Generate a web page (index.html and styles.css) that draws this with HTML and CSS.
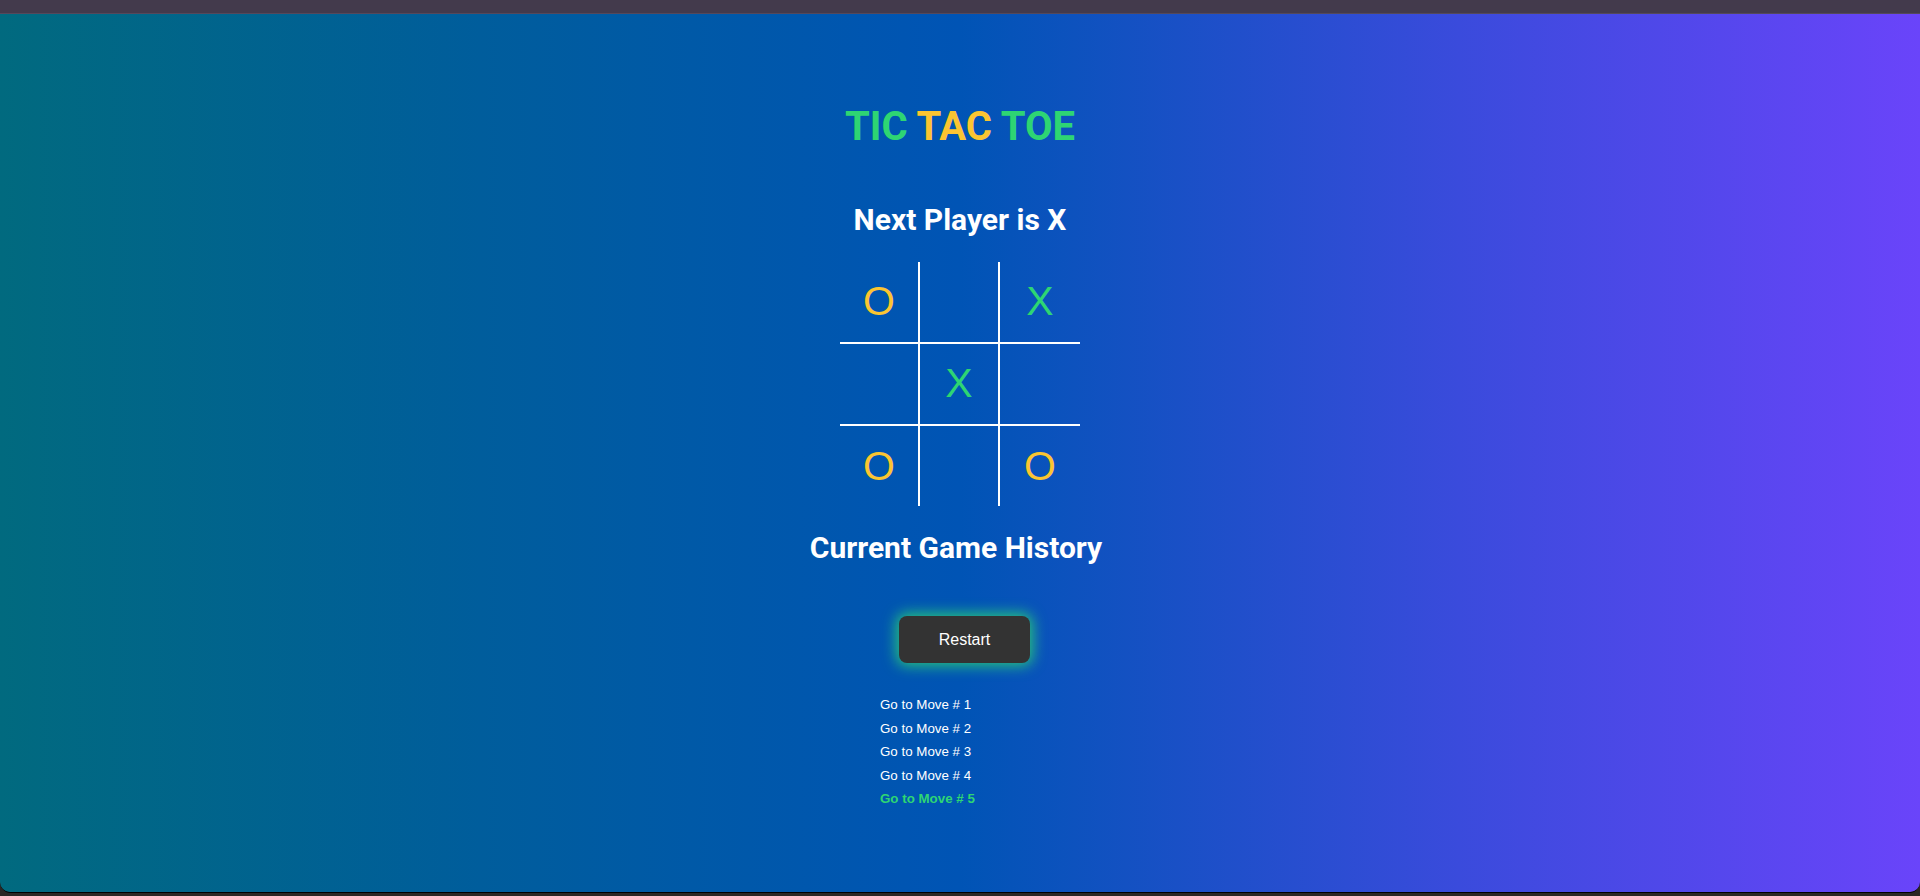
FILE: index.html
```html
<!DOCTYPE html>
<html lang="en">
<head>
<meta charset="utf-8">
<title>Tic Tac Toe</title>
<link rel="stylesheet" href="styles.css">
</head>
<body>
<div class="window">
  <div class="titlebar"></div>
  <div class="viewport">
    <main class="game">
      <h1 class="title"><span class="green">TIC</span> <span class="yellow">TAC</span> <span class="green">TOE</span></h1>
      <h2 class="status">Next Player is X</h2>
      <div class="board">
        <div class="cell o">O</div>
        <div class="cell"></div>
        <div class="cell x last-col">X</div>
        <div class="cell"></div>
        <div class="cell x">X</div>
        <div class="cell last-col"></div>
        <div class="cell o last-row">O</div>
        <div class="cell last-row"></div>
        <div class="cell o last-row last-col">O</div>
      </div>
      <h2 class="history-title">Current Game History</h2>
      <button class="restart">Restart</button>
      <ol class="moves">
        <li><button class="move">Go to Move # 1</button></li>
        <li><button class="move">Go to Move # 2</button></li>
        <li><button class="move">Go to Move # 3</button></li>
        <li><button class="move">Go to Move # 4</button></li>
        <li><button class="move current">Go to Move # 5</button></li>
      </ol>
    </main>
  </div>
</div>
</body>
</html>
```

FILE: styles.css
```css
* { box-sizing: border-box; }

html, body {
  margin: 0;
  padding: 0;
  height: 896px;
  overflow: hidden;
  background: #2b2724;
}

.window {
  height: 892px;
  display: flex;
  flex-direction: column;
  box-shadow: 0 1px 0 #000;
  border-radius: 0 0 11px 11px;
}

.titlebar {
  height: 14px;
  flex: none;
  background: #433a4c;
  border-bottom: 1px solid #54495c;
}

.viewport {
  flex: 1;
  background: linear-gradient(90deg, #016a7f 0%, #005d9c 25%, #0054b5 50%, #3a4bdc 76%, #6a44fa 100%);
  border-radius: 0 0 10px 10px;
  padding-top: 89px;
  overflow: hidden;
}

.game {
  display: flex;
  flex-direction: column;
  align-items: center;
  font-family: Roboto, "Liberation Sans", sans-serif;
  color: #fff;
}

.title {
  margin: 0;
  font-size: 40px;
  line-height: 48px;
  font-weight: 700;
}

.green { color: #2ed573; }
.yellow { color: #fbc531; }

.status {
  margin: 51px 0 0;
  font-size: 30px;
  line-height: 36px;
  font-weight: 700;
}

.board {
  margin-top: 24px;
  display: grid;
  grid-template-columns: 80px 80px 80px;
}

.cell {
  height: 82px;
  border-right: 2px solid #fff;
  border-bottom: 2px solid #fff;
  display: flex;
  align-items: center;
  justify-content: center;
  font-family: "Liberation Sans", Arial, sans-serif;
  font-size: 41px;
  font-weight: 400;
  padding-bottom: 2px;
}

.cell.last-col { border-right: none; }
.cell.last-row { border-bottom: none; height: 80px; padding-bottom: 0; }

.cell.o { color: #fbc531; }
.cell.x { color: #2ed573; }

.history-title {
  margin: 24px 8px 0 0;
  font-size: 30px;
  line-height: 36px;
  font-weight: 700;
}

.restart {
  margin: 50px 0 0 9px;
  width: 131px;
  height: 47px;
  border: none;
  border-radius: 8px;
  background: #333333;
  color: #fff;
  font-family: "Liberation Sans", Arial, sans-serif;
  font-size: 16px;
  box-shadow: 0 0 14px 3px rgba(46, 213, 115, 0.85);
}

.moves {
  list-style: none;
  margin: 29px 0 0;
  padding: 0;
  width: 240px;
  padding-left: 40px;
  align-self: center;
}

.moves li {
  height: 23.5px;
  line-height: 23.5px;
}

.move {
  background: none;
  border: none;
  padding: 0;
  color: #fff;
  font-family: "Liberation Sans", Arial, sans-serif;
  font-size: 13.33px;
  line-height: 23.5px;
}

.move.current {
  color: #2ed573;
  font-weight: 700;
}
```
